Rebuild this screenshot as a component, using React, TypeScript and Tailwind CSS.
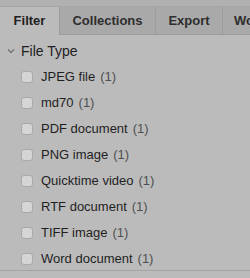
const tabs = ["Filter", "Collections", "Export", "Workflows"];

const fileTypes = [
  { label: "JPEG file", count: 1 },
  { label: "md70", count: 1 },
  { label: "PDF document", count: 1 },
  { label: "PNG image", count: 1 },
  { label: "Quicktime video", count: 1 },
  { label: "RTF document", count: 1 },
  { label: "TIFF image", count: 1 },
  { label: "Word document", count: 1 },
];

export default function App() {
  return (
    <div
      className="w-[250px] h-[278px] overflow-hidden bg-[#bbbbbb] text-[#1f1f1f] flex flex-col"
      style={{ fontFamily: '"Liberation Sans", Arial, sans-serif' }}
    >
      {/* top strip */}
      <div className="h-[7px] shrink-0 bg-[#b1b1b1] border-b border-[#a6a6a6]" />

      {/* tab bar */}
      <div className="flex h-[28px] shrink-0 whitespace-nowrap">
        {tabs.map((tab, i) => (
          <div
            key={tab}
            className={
              i === 0
                ? "w-[59px] shrink-0 flex items-center justify-center text-[13px] font-bold bg-[#bbbbbb]"
                : "shrink-0 flex items-center justify-center text-[13px] font-bold text-[#2e2e2e] bg-[#a9a9a9] border-l border-b border-[#9c9c9c] " +
                  (i === 1 ? "w-[96px]" : i === 2 ? "w-[67px]" : "w-[60px] justify-start pl-[11px]")
            }
          >
            {tab}
          </div>
        ))}
      </div>

      {/* file type section */}
      <div className="flex items-center h-[24px] pl-[7px] mt-[4px]">
        <svg width="8" height="6" viewBox="0 0 8 6" className="mr-[6px]">
          <path d="M1 1.5 L4 4.5 L7 1.5" fill="none" stroke="#6a6a6a" strokeWidth="1.1" />
        </svg>
        <span className="text-[14px]">File Type</span>
      </div>

      <ul className="flex flex-col mt-[1px]">
        {fileTypes.map((ft) => (
          <li key={ft.label} className="flex items-center h-[26px] pl-[21px]">
            <span className="w-[12px] h-[12px] rounded-[3px] bg-[#d5d5d5] border border-[#a9a9a9] shrink-0" />
            <span className="ml-[8px] text-[13px]">{ft.label}</span>
            <span className="ml-[5px] text-[13px] text-[#505050]">({ft.count})</span>
          </li>
        ))}
      </ul>

      <div className="-mt-[2px] border-t border-[#a4a4a4]" />
    </div>
  );
}
